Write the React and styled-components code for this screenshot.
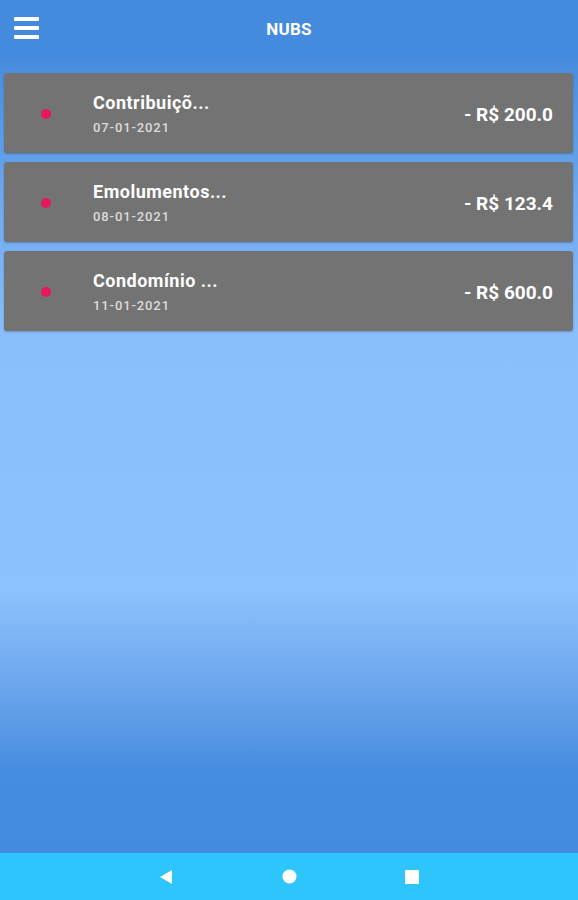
import React from 'react';
import styled, { createGlobalStyle } from 'styled-components';

const GlobalStyle = createGlobalStyle`
  html, body {
    margin: 0;
    padding: 0;
    font-family: Roboto, "Liberation Sans", sans-serif;
  }
`;

const Screen = styled.div`
  width: 578px;
  height: 900px;
  display: flex;
  flex-direction: column;
  overflow: hidden;
  background: linear-gradient(
    180deg,
    #458bdd 0px,
    #458bdd 55px,
    #6ea8ef 200px,
    #8bbffc 340px,
    #8ec2fe 590px,
    #78b0f2 650px,
    #5e9ce7 720px,
    #468cdf 770px,
    #458bdd 853px
  );
`;

const Header = styled.header`
  height: 58px;
  display: flex;
  align-items: center;
  justify-content: center;
  position: relative;
  flex-shrink: 0;
`;

const MenuButton = styled.div`
  position: absolute;
  left: 14px;
  top: 17px;
  width: 25px;
  display: flex;
  flex-direction: column;
  gap: 5px;
`;

const MenuLine = styled.span`
  display: block;
  height: 4px;
  border-radius: 1px;
  background: #fff;
`;

const Title = styled.h1`
  margin: 0;
  font-size: 17px;
  font-weight: 700;
  color: #fff;
  letter-spacing: 0.2px;
`;

const List = styled.div`
  flex: 1;
  display: flex;
  flex-direction: column;
  gap: 9px;
  padding: 15px 5px 0 4px;
`;

const Card = styled.div`
  height: 80px;
  background: #737373;
  border-radius: 3px;
  box-shadow: 0 1px 2px rgba(0, 0, 0, 0.25);
  display: flex;
  align-items: center;
  box-sizing: border-box;
  padding: 0 20px 0 37px;
`;

const Dot = styled.span`
  width: 10px;
  height: 10px;
  border-radius: 50%;
  background: #e8175d;
  flex-shrink: 0;
  margin-top: 1px;
`;

const Info = styled.div`
  flex: 1;
  display: flex;
  flex-direction: column;
  margin-left: 42px;
  margin-top: 2px;
`;

const ItemName = styled.div`
  font-size: 18px;
  font-weight: 700;
  letter-spacing: 0.5px;
  color: #fff;
  line-height: 20px;
`;

const ItemDate = styled.div`
  margin-top: 7px;
  font-size: 13px;
  font-weight: 500;
  letter-spacing: 0.9px;
  color: #dcdcdc;
  line-height: 16px;
`;

const Amount = styled.div`
  font-size: 19px;
  font-weight: 700;
  color: #fff;
  margin-top: 2px;
`;

const NavBar = styled.nav`
  height: 47px;
  flex-shrink: 0;
  background: #2ec4fc;
  display: flex;
  align-items: center;
  justify-content: center;
`;

const NavSlot = styled.div`
  width: 123px;
  display: flex;
  justify-content: center;
`;

const items = [
  { name: 'Contribuiçõ...', date: '07-01-2021', amount: '- R$ 200.0' },
  { name: 'Emolumentos...', date: '08-01-2021', amount: '- R$ 123.4' },
  { name: 'Condomínio ...', date: '11-01-2021', amount: '- R$ 600.0' },
];

const App = () => (
  <>
    <GlobalStyle />
    <Screen>
      <Header>
        <MenuButton>
          <MenuLine />
          <MenuLine />
          <MenuLine />
        </MenuButton>
        <Title>NUBS</Title>
      </Header>
      <List>
        {items.map(item => (
          <Card key={item.date}>
            <Dot />
            <Info>
              <ItemName>{item.name}</ItemName>
              <ItemDate>{item.date}</ItemDate>
            </Info>
            <Amount>{item.amount}</Amount>
          </Card>
        ))}
      </List>
      <NavBar>
        <NavSlot>
          <svg width="14" height="16" viewBox="0 0 14 16">
            <path d="M13 1 L1 8 L13 15 Z" fill="#fff" />
          </svg>
        </NavSlot>
        <NavSlot>
          <svg width="15" height="15" viewBox="0 0 15 15">
            <circle cx="7.5" cy="7.5" r="7" fill="#fff" />
          </svg>
        </NavSlot>
        <NavSlot>
          <svg width="14" height="14" viewBox="0 0 14 14">
            <rect x="0" y="0" width="14" height="14" rx="1" fill="#fff" />
          </svg>
        </NavSlot>
      </NavBar>
    </Screen>
  </>
);

export default App;
